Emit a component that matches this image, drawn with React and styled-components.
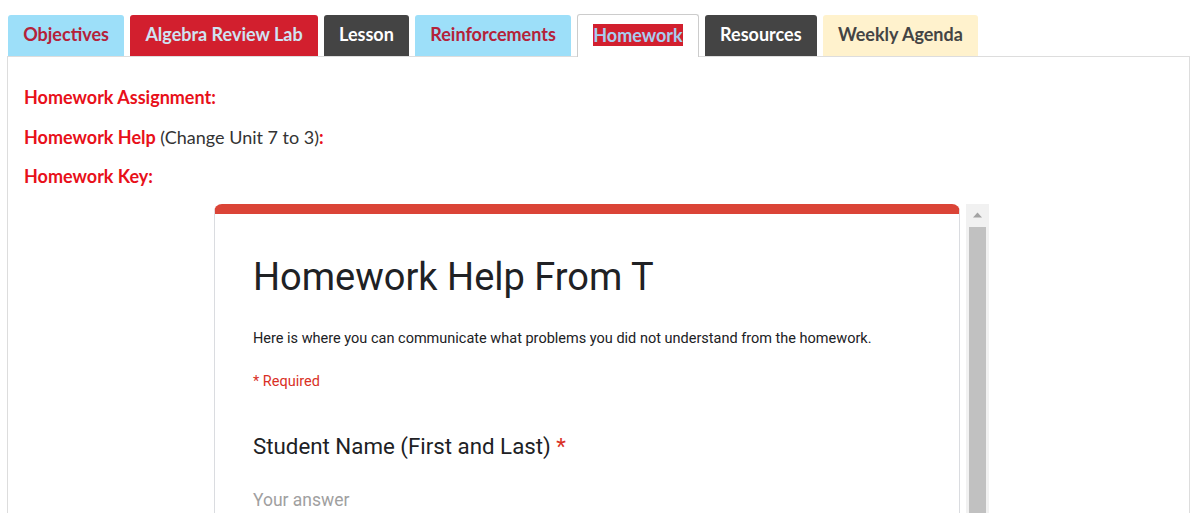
import React from "react";
import styled, { createGlobalStyle } from "styled-components";

const GlobalStyle = createGlobalStyle`
  html, body {
    margin: 0;
    padding: 0;
    overflow: hidden;
    background: #fff;
  }
  body {
    font-family: Lato, "Liberation Sans", sans-serif;
  }
`;

const Page = styled.div`
  padding: 14px 10px 0 7px;
  height: 513px;
  box-sizing: border-box;
`;

const TabBar = styled.ul`
  display: flex;
  gap: 6px;
  margin: 0;
  padding: 0 0 0 1px;
  list-style: none;
  align-items: flex-end;
  position: relative;
  z-index: 1;
`;

const tabColors = {
  blue: { bg: "#9ddff9", fg: "#b42239" },
  red: { bg: "#d21f2e", fg: "#cfe3f2" },
  dark: { bg: "#444444", fg: "#ffffff" },
  cream: { bg: "#fff2cd", fg: "#444444" },
  active: { bg: "#ffffff", fg: "#d21f2e" },
};

const Tab = styled.li`
  height: ${({ $active }) => ($active ? "43px" : "41px")};
  box-sizing: border-box;
  padding: 0 15.2px 3px;
  display: flex;
  align-items: center;
  border-radius: 3px 3px 0 0;
  background: ${({ $kind }) => tabColors[$kind].bg};
  color: ${({ $kind }) => tabColors[$kind].fg};
  font-weight: 700;
  font-size: 18px;
  border: ${({ $active }) => ($active ? "1px solid #cccccc" : "none")};
  border-bottom: none;
  margin-bottom: ${({ $active }) => ($active ? "-1px" : "0")};
`;

const Selected = styled.span`
  background: #d21f2e;
  color: #a8cdf0;
`;

const Panel = styled.div`
  border: 1px solid #dddddd;
  border-bottom: none;
  padding: 28px 16px 0 16px;
  height: 600px;
`;

const Line = styled.p`
  margin: 0 0 15px;
  font-size: 18px;
  line-height: 24.5px;
  color: #333333;
`;

const Red = styled.span`
  color: #e8101a;
  font-weight: 700;
`;

const Embed = styled.div`
  display: flex;
  width: 775px;
  height: 320px;
  margin-left: 190px;
  font-family: Roboto, "Liberation Sans", sans-serif;
`;

const FormArea = styled.div`
  flex: 1;
  overflow: hidden;
  padding-right: 6px;
`;

const Card = styled.div`
  border: 1px solid #dadce0;
  border-top: 10px solid #db4437;
  border-radius: 8px 8px 0 0;
  height: 400px;
  padding: 40px 38px 0;
  background: #fff;
`;

const Title = styled.h1`
  margin: 0;
  font-size: 38px;
  line-height: 46px;
  font-weight: 400;
  color: #202124;
`;

const Description = styled.div`
  margin-top: 29px;
  font-size: 14.5px;
  line-height: 20px;
  color: #202124;
`;

const Required = styled.div`
  margin-top: 23px;
  font-size: 14.5px;
  line-height: 20px;
  color: #d93025;
`;

const Question = styled.div`
  margin-top: 40px;
  font-size: 22.3px;
  line-height: 28px;
  color: #202124;
`;

const Star = styled.span`
  color: #d93025;
`;

const Answer = styled.div`
  margin-top: 28px;
  font-size: 17.5px;
  line-height: 24px;
  color: #a0a0a0;
`;

const Scrollbar = styled.div`
  width: 23px;
  background: #f1f1f1;
  display: flex;
  flex-direction: column;
  align-items: center;
`;

const ArrowButton = styled.div`
  height: 23px;
  width: 100%;
  display: flex;
  align-items: center;
  justify-content: center;
`;

const Thumb = styled.div`
  flex: 1;
  width: 17px;
  background: #c1c1c1;
`;

const tabs = [
  { label: "Objectives", kind: "blue" },
  { label: "Algebra Review Lab", kind: "red" },
  { label: "Lesson", kind: "dark" },
  { label: "Reinforcements", kind: "blue" },
  { label: "Homework", kind: "active", active: true },
  { label: "Resources", kind: "dark" },
  { label: "Weekly Agenda", kind: "cream" },
];

const App = () => {
  return (
    <Page>
      <GlobalStyle />
      <TabBar>
        {tabs.map((tab) => (
          <Tab key={tab.label} $kind={tab.kind} $active={tab.active}>
            {tab.active ? <Selected>{tab.label}</Selected> : tab.label}
          </Tab>
        ))}
      </TabBar>
      <Panel>
        <Line>
          <Red>Homework Assignment:</Red>
        </Line>
        <Line>
          <Red>Homework Help</Red> (Change Unit 7 to 3)<Red>:</Red>
        </Line>
        <Line>
          <Red>Homework Key:</Red>
        </Line>
        <Embed>
          <FormArea>
            <Card>
              <Title>Homework Help From T</Title>
              <Description>
                Here is where you can communicate what problems you did not understand from the homework.
              </Description>
              <Required>* Required</Required>
              <Question>
                Student Name (First and Last) <Star>*</Star>
              </Question>
              <Answer>Your answer</Answer>
            </Card>
          </FormArea>
          <Scrollbar>
            <ArrowButton>
              <svg width="9" height="6" viewBox="0 0 9 6">
                <path d="M0 5.5 L4.5 0.5 L9 5.5 Z" fill="#a3a3a3" />
              </svg>
            </ArrowButton>
            <Thumb />
          </Scrollbar>
        </Embed>
      </Panel>
    </Page>
  );
};

export default App;
